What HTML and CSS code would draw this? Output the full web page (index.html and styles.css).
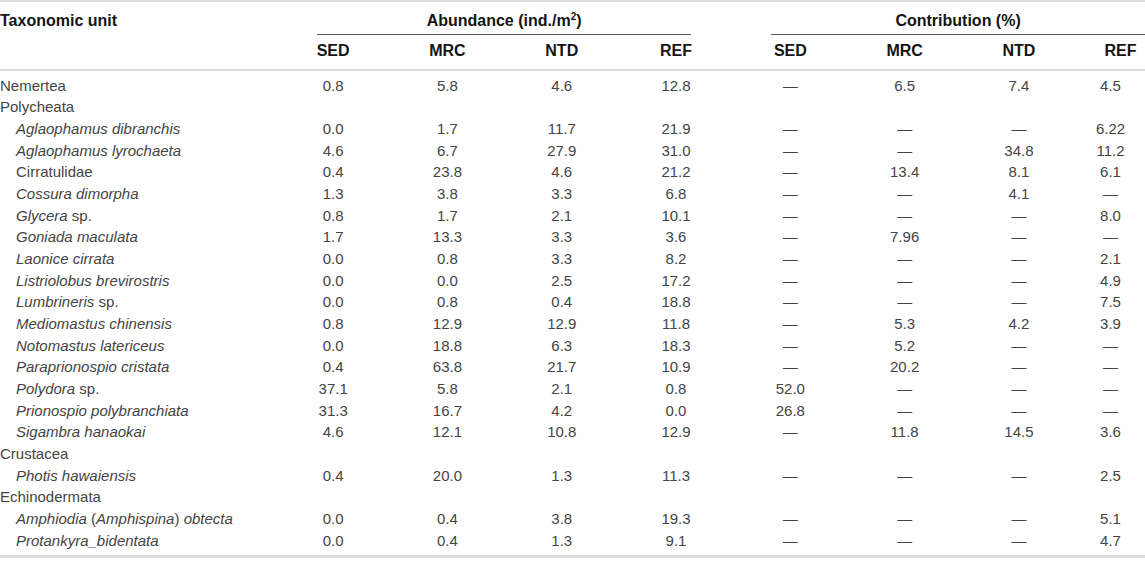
FILE: index.html
```html
<!DOCTYPE html>
<html lang="en">
<head>
<meta charset="utf-8">
<title>Taxonomic table</title>
<link rel="stylesheet" href="styles.css">
</head>
<body>
<div class="table">
  <div class="head">
    <div class="grid hrow1">
      <div class="tax">Taxonomic unit</div>
      <div class="group-title abund"><span>Abundance (ind./m<sup>2</sup>)</span></div>
      <div class="group-title contrib"><span>Contribution (%)</span></div>
    </div>
    <div class="grid hrow2">
      <div class="tax"></div>
      <span class="c">SED</span><span class="c">MRC</span><span class="c">NTD</span><span class="c">REF</span>
      <span class="c">SED</span><span class="c">MRC</span><span class="c">NTD</span><span class="c last">REF</span>
    </div>
  </div>
  <div class="body">
    <div class="grid row"><div class="tax">Nemertea</div><span class="c">0.8</span><span class="c">5.8</span><span class="c">4.6</span><span class="c">12.8</span><span class="c">—</span><span class="c">6.5</span><span class="c">7.4</span><span class="c">4.5</span></div>
    <div class="grid row"><div class="tax">Polycheata</div></div>
    <div class="grid row"><div class="tax sp"><i>Aglaophamus dibranchis</i></div><span class="c">0.0</span><span class="c">1.7</span><span class="c">11.7</span><span class="c">21.9</span><span class="c">—</span><span class="c">—</span><span class="c">—</span><span class="c">6.22</span></div>
    <div class="grid row"><div class="tax sp"><i>Aglaophamus lyrochaeta</i></div><span class="c">4.6</span><span class="c">6.7</span><span class="c">27.9</span><span class="c">31.0</span><span class="c">—</span><span class="c">—</span><span class="c">34.8</span><span class="c">11.2</span></div>
    <div class="grid row"><div class="tax sp">Cirratulidae</div><span class="c">0.4</span><span class="c">23.8</span><span class="c">4.6</span><span class="c">21.2</span><span class="c">—</span><span class="c">13.4</span><span class="c">8.1</span><span class="c">6.1</span></div>
    <div class="grid row"><div class="tax sp"><i>Cossura dimorpha</i></div><span class="c">1.3</span><span class="c">3.8</span><span class="c">3.3</span><span class="c">6.8</span><span class="c">—</span><span class="c">—</span><span class="c">4.1</span><span class="c">—</span></div>
    <div class="grid row"><div class="tax sp"><i>Glycera</i> sp.</div><span class="c">0.8</span><span class="c">1.7</span><span class="c">2.1</span><span class="c">10.1</span><span class="c">—</span><span class="c">—</span><span class="c">—</span><span class="c">8.0</span></div>
    <div class="grid row"><div class="tax sp"><i>Goniada maculata</i></div><span class="c">1.7</span><span class="c">13.3</span><span class="c">3.3</span><span class="c">3.6</span><span class="c">—</span><span class="c">7.96</span><span class="c">—</span><span class="c">—</span></div>
    <div class="grid row"><div class="tax sp"><i>Laonice cirrata</i></div><span class="c">0.0</span><span class="c">0.8</span><span class="c">3.3</span><span class="c">8.2</span><span class="c">—</span><span class="c">—</span><span class="c">—</span><span class="c">2.1</span></div>
    <div class="grid row"><div class="tax sp"><i>Listriolobus brevirostris</i></div><span class="c">0.0</span><span class="c">0.0</span><span class="c">2.5</span><span class="c">17.2</span><span class="c">—</span><span class="c">—</span><span class="c">—</span><span class="c">4.9</span></div>
    <div class="grid row"><div class="tax sp"><i>Lumbrineris</i> sp.</div><span class="c">0.0</span><span class="c">0.8</span><span class="c">0.4</span><span class="c">18.8</span><span class="c">—</span><span class="c">—</span><span class="c">—</span><span class="c">7.5</span></div>
    <div class="grid row"><div class="tax sp"><i>Mediomastus chinensis</i></div><span class="c">0.8</span><span class="c">12.9</span><span class="c">12.9</span><span class="c">11.8</span><span class="c">—</span><span class="c">5.3</span><span class="c">4.2</span><span class="c">3.9</span></div>
    <div class="grid row"><div class="tax sp"><i>Notomastus latericeus</i></div><span class="c">0.0</span><span class="c">18.8</span><span class="c">6.3</span><span class="c">18.3</span><span class="c">—</span><span class="c">5.2</span><span class="c">—</span><span class="c">—</span></div>
    <div class="grid row"><div class="tax sp"><i>Paraprionospio cristata</i></div><span class="c">0.4</span><span class="c">63.8</span><span class="c">21.7</span><span class="c">10.9</span><span class="c">—</span><span class="c">20.2</span><span class="c">—</span><span class="c">—</span></div>
    <div class="grid row"><div class="tax sp"><i>Polydora</i> sp.</div><span class="c">37.1</span><span class="c">5.8</span><span class="c">2.1</span><span class="c">0.8</span><span class="c">52.0</span><span class="c">—</span><span class="c">—</span><span class="c">—</span></div>
    <div class="grid row"><div class="tax sp"><i>Prionospio polybranchiata</i></div><span class="c">31.3</span><span class="c">16.7</span><span class="c">4.2</span><span class="c">0.0</span><span class="c">26.8</span><span class="c">—</span><span class="c">—</span><span class="c">—</span></div>
    <div class="grid row"><div class="tax sp"><i>Sigambra hanaokai</i></div><span class="c">4.6</span><span class="c">12.1</span><span class="c">10.8</span><span class="c">12.9</span><span class="c">—</span><span class="c">11.8</span><span class="c">14.5</span><span class="c">3.6</span></div>
    <div class="grid row"><div class="tax">Crustacea</div></div>
    <div class="grid row"><div class="tax sp"><i>Photis hawaiensis</i></div><span class="c">0.4</span><span class="c">20.0</span><span class="c">1.3</span><span class="c">11.3</span><span class="c">—</span><span class="c">—</span><span class="c">—</span><span class="c">2.5</span></div>
    <div class="grid row"><div class="tax">Echinodermata</div></div>
    <div class="grid row"><div class="tax sp"><i>Amphiodia</i> (<i>Amphispina</i>) <i>obtecta</i></div><span class="c">0.0</span><span class="c">0.4</span><span class="c">3.8</span><span class="c">19.3</span><span class="c">—</span><span class="c">—</span><span class="c">—</span><span class="c">5.1</span></div>
    <div class="grid row"><div class="tax sp"><i>Protankyra_bidentata</i></div><span class="c">0.0</span><span class="c">0.4</span><span class="c">1.3</span><span class="c">9.1</span><span class="c">—</span><span class="c">—</span><span class="c">—</span><span class="c">4.7</span></div>
  </div>
</div>
</body>
</html>
```
FILE: styles.css
```css
html, body {
  margin: 0;
  padding: 0;
  background: #ffffff;
}

body {
  font-family: "Liberation Sans", Arial, Helvetica, sans-serif;
  color: #444444;
  font-size: 15px;
}

.table {
  width: 1145px;
  border-top: 2px solid #dcdcdc;
  border-bottom: 3px solid #dcdcdc;
}

.grid {
  display: grid;
  grid-template-columns: 276px repeat(7, 114.3px) 1fr;
  align-items: center;
}

.head {
  border-bottom: 2px solid #dcdcdc;
  color: #141414;
  font-weight: bold;
  font-size: 16px;
  line-height: 18px;
}

.hrow1 {
  padding-top: 10px;
  align-items: start;
}

.group-title {
  grid-column: span 4;
  display: flex;
}

.group-title span {
  flex: 1;
  text-align: center;
  padding-bottom: 4px;
  border-bottom: 1px solid #5a5a5a;
}

.group-title.abund {
  padding-left: 41px;
  padding-right: 42px;
}

.group-title.contrib {
  padding-left: 38px;
}

.group-title sup {
  font-size: 10px;
  line-height: 0;
  vertical-align: 6px;
}

.hrow2 {
  padding-top: 7px;
  padding-bottom: 9px;
}

.tax {
  white-space: nowrap;
}

.tax.sp {
  padding-left: 16px;
}

.c {
  text-align: center;
  white-space: nowrap;
}

.hrow2 .c.last {
  padding-left: 20px;
}

.body {
  padding-top: 4px;
  padding-bottom: 3.3px;
}

.row {
  height: 21.67px;
  line-height: 18px;
}

.row i {
  font-style: italic;
}
```
